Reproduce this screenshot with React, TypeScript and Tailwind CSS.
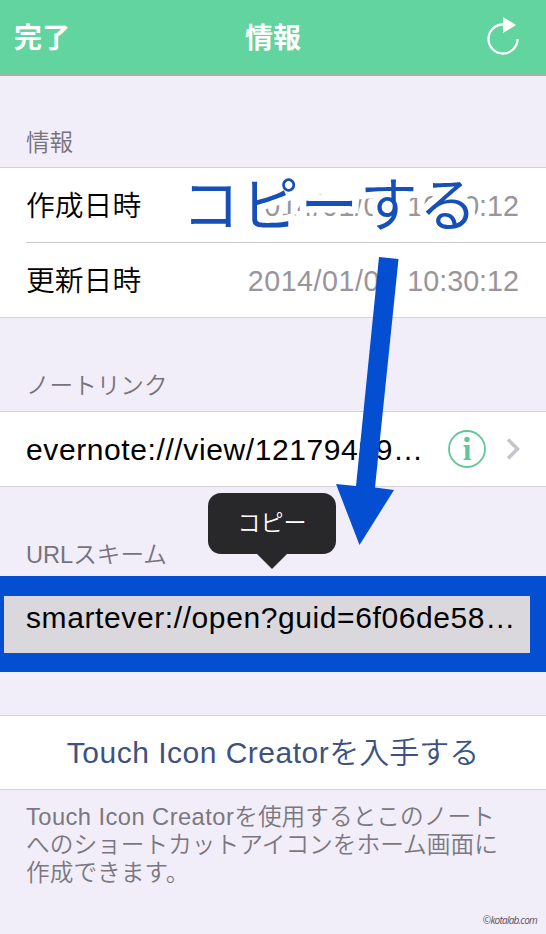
import type { ReactNode } from "react";

function Caption({ children, className }: { children: ReactNode; className: string }) {
  return (
    <h2 className={`flex items-end pl-[26px] text-[23.6px] leading-[30px] font-[350] text-[#77737c] ${className}`}>
      {children}
    </h2>
  );
}

function DateRow({ label, date, time }: { label: string; date: string; time: string }) {
  return (
    <div className="flex flex-1 items-center justify-between pr-[27px]">
      <span className="pt-px text-[28.8px] leading-[36px] font-[350] text-black">{label}</span>
      <span className="flex gap-[11px] pt-px text-[28.7px] leading-[36px] text-[#98959b]">
        <span className="tracking-[0.5px]">{date}</span>
        <span>{time}</span>
      </span>
    </div>
  );
}

export default function App() {
  return (
    <main className="relative flex h-[934px] w-[546px] flex-col overflow-hidden bg-[#f2eef9] font-['Liberation_Sans','Noto_Sans_CJK_JP',sans-serif]">
      <header className="grid h-[76px] shrink-0 grid-cols-3 items-center border-b-2 border-[#a3b3aa] bg-[#61d4a0] px-[14px] text-[28px] font-bold text-white">
        <button className="pt-[3px] text-left leading-9">完了</button>
        <h1 className="pt-[3px] text-center leading-9">情報</h1>
        <svg className="mr-3 mb-[2px] h-[42px] w-[34px] justify-self-end" viewBox="0 0 34 42" fill="none">
          <path d="M17 9.500A14.500 14.500 0 1 0 31.500 24" stroke="white" strokeWidth="2.300" />
          <path d="M17 2v16l13-8z" fill="white" />
        </svg>
      </header>

      <Caption className="h-[82px]">情報</Caption>
      <section className="mt-[9px] flex h-[151px] flex-col border-y border-[#d5d2da] bg-white pl-[26px]">
        <DateRow label="作成日時" date="2014/01/08" time="10:30:12" />
        <div className="h-px bg-[#c8c7cc]" />
        <DateRow label="更新日時" date="2014/01/08" time="10:30:12" />
      </section>

      <Caption className="h-[83px]">ノートリンク</Caption>
      <section className="mt-[10px] flex h-[76px] items-center border-y border-[#d5d2da] bg-white pr-[25px] pl-[26px]">
        <span className="pt-px text-[30px] leading-9 tracking-[0.6px] whitespace-nowrap text-black">evernote:///view/12179489…</span>
        <svg className="ml-auto h-[40px] w-[40px] shrink-0" viewBox="0 0 40 40" fill="none">
          <circle cx="20" cy="20" r="18" stroke="#5fc795" strokeWidth="1.800" />
          <circle cx="20" cy="10.500" r="2.700" fill="#5fc795" />
          <path d="M16.500 16h6v12.500c0 1 .5 1.200 1.500 1.300V31h-7.500v-1.200c1.300-.1 1.800-.3 1.800-1.300V18.800c0-1-.5-1.300-1.800-1.400z" fill="#5fc795" />
        </svg>
        <svg className="ml-[18px] h-[24px] w-[16px] shrink-0" viewBox="0 0 16 24" fill="none">
          <path d="M3 2.500 12.500 12 3 21.500" stroke="#c7c3ca" strokeWidth="3.500" />
        </svg>
      </section>

      <Caption className="h-[83px]">URLスキーム</Caption>
      <section className="mt-[6px] flex h-[96px] items-start border-t-[20px] border-r-[16px] border-b-[19px] border-l-[4px] border-[#034ed1] bg-[#dad8dc] pl-[22px]">
        <span className="mt-1 text-[30px] leading-9 tracking-[0.6px] whitespace-nowrap text-black">smartever://open?guid=6f06de58…</span>
      </section>

      <button className="mt-[43px] flex h-[75px] shrink-0 items-center justify-center border-y border-[#d5d2da] bg-white text-[30px] font-[350] text-[#3d5282]">
        <span className="tracking-[0.5px]">Touch Icon Creator</span>を入手する
      </button>
      <p className="mt-[13px] pl-[26px] text-[23.7px] leading-[28px] font-[350] whitespace-nowrap text-[#7b7781]">
        <span className="tracking-[0.45px]">Touch Icon Creator</span>を使用するとこのノート<br />
        へのショートカットアイコンをホーム画面に<br />
        作成できます。
      </p>
      <footer className="mt-auto mr-[9px] mb-[5px] self-end font-['Open_Sans',sans-serif] text-[10px] leading-[18px] tracking-[-0.75px] text-[#58545d] italic">
        ©kotalab.com
      </footer>

      {/* Copy menu callout */}
      <div className="absolute top-[493px] left-[208px] flex h-[61px] w-[128px] items-center justify-center rounded-[13px] bg-[#28272a] text-[23px] font-[350] text-white">
        コピー
        <svg className="absolute top-[60px] left-[48px] h-[16px] w-[32px]" viewBox="0 0 32 16">
          <path d="M0 0h32L16 16z" fill="#28272a" />
        </svg>
      </div>

      {/* Tutorial annotation */}
      <strong className="absolute top-[164px] left-[182px] text-[57.5px] leading-[84px] font-normal tracking-[1.8px] whitespace-nowrap text-[#164fb7] [-webkit-text-stroke:13px_white] [paint-order:stroke_fill]">
        コピーする
      </strong>
      <svg className="absolute top-[256px] left-[334px] h-[292px] w-[68px]" viewBox="334 256 68 292">
        <path d="M379 257 398.500 259 375 487.500 394 490 359.500 545 336 484 356 486z" fill="#034ed1" />
      </svg>
    </main>
  );
}
